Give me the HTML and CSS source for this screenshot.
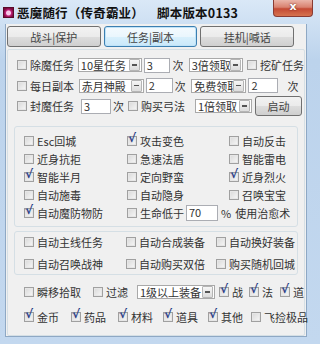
FILE: index.html
```html
<!DOCTYPE html>
<html lang="zh-CN">
<head>
  <meta charset="UTF-8">
  <title>恶魔随行</title>
  <link rel="stylesheet" href="styles.css">
</head>
<body>
  <div class="window">
    <div class="titlebar">
      <span class="app-icon"></span>
      <span class="title">恶魔随行（传奇霸业）</span>
      <span class="title version">脚本版本0133</span>
      <span class="close">x</span>
    </div>
    <div class="client">
      <div class="tabs">
        <button class="tab">战斗|保护</button>
        <button class="tab active">任务|副本</button>
        <button class="tab">挂机|喊话</button>
      </div>
      <div class="panel">
        <div class="tasks">
          <div class="row">
            <label class="chk w64"><span class="box"></span>除魔任务</label>
            <span class="select w65"><span class="val">10星任务</span><span class="arrow"></span></span>
            <span class="input w26">3</span>
            <span class="unit">次</span>
            <span class="select w55"><span class="val">3倍领取</span><span class="arrow"></span></span>
            <label class="chk ml4"><span class="box"></span>挖矿任务</label>
          </div>
          <div class="row">
            <label class="chk w64"><span class="box"></span>每日副本</label>
            <span class="select w65"><span class="val">赤月神殿</span><span class="arrow"></span></span>
            <span class="input w26">2</span>
            <span class="unit">次</span>
            <span class="select w55"><span class="val">免费领取</span><span class="arrow"></span></span>
            <span class="input w28 ml2">2</span>
            <span class="unit ml8">次</span>
          </div>
          <div class="row">
            <label class="chk w64"><span class="box"></span>封魔任务</label>
            <span class="input w28 ml0">3</span>
            <span class="unit u17">次</span>
            <label class="chk w67"><span class="box"></span>购买弓法</label>
            <span class="select w55"><span class="val">1倍领取</span><span class="arrow"></span></span>
            <button class="btn">启动</button>
          </div>
        </div>

        <div class="group skills">
          <label class="chk"><span class="box"></span>Esc回城</label>
          <label class="chk"><span class="box on"></span>攻击变色</label>
          <label class="chk"><span class="box"></span>自动反击</label>
          <label class="chk"><span class="box"></span>近身抗拒</label>
          <label class="chk"><span class="box"></span>急速法盾</label>
          <label class="chk"><span class="box"></span>智能雷电</label>
          <label class="chk"><span class="box on"></span>智能半月</label>
          <label class="chk"><span class="box"></span>定向野蛮</label>
          <label class="chk"><span class="box on"></span>近身烈火</label>
          <label class="chk"><span class="box"></span>自动施毒</label>
          <label class="chk"><span class="box"></span>自动隐身</label>
          <label class="chk"><span class="box"></span>召唤宝宝</label>
          <label class="chk"><span class="box on"></span>自动魔防物防</label>
          <div class="heal">
            <label class="chk"><span class="box"></span>生命低于</label>
            <span class="input w30">70</span>
            <span class="pct">%</span>
            <span>使用治愈术</span>
          </div>
        </div>

        <div class="group auto">
          <label class="chk"><span class="box"></span>自动主线任务</label>
          <label class="chk"><span class="box"></span>自动合成装备</label>
          <label class="chk"><span class="box"></span>自动换好装备</label>
          <label class="chk"><span class="box"></span>自动召唤战神</label>
          <label class="chk"><span class="box"></span>自动购买双倍</label>
          <label class="chk"><span class="box"></span>购买随机回城</label>
        </div>

        <div class="pickup">
          <div class="row">
            <label class="chk"><span class="box"></span>瞬移拾取</label>
            <label class="chk ml12"><span class="box"></span>过滤</label>
            <span class="select w81 ml9"><span class="val">1级以上装备</span><span class="arrow"></span></span>
            <label class="chk ml4"><span class="box on"></span>战</label>
            <label class="chk ml6"><span class="box on"></span>法</label>
            <label class="chk ml7"><span class="box on"></span>道</label>
          </div>
          <div class="row">
            <label class="chk"><span class="box on"></span>金币</label>
            <label class="chk ml12"><span class="box on"></span>药品</label>
            <label class="chk ml12"><span class="box on"></span>材料</label>
            <label class="chk ml10"><span class="box on"></span>道具</label>
            <label class="chk ml10"><span class="box on"></span>其他</label>
            <label class="chk ml8"><span class="box"></span>飞捡极品</label>
          </div>
        </div>
      </div>
    </div>
  </div>
</body>
</html>
```

FILE: styles.css
```css
body {
  margin: 0;
  font-family: "Noto Sans CJK SC", "Noto Sans", sans-serif;
  font-size: 11px;
  color: #333;
}
.window {
  width: 320px;
  height: 344px;
  background: linear-gradient(#dae8f7, #bcd3ec 60px, #c3d8ef);
  display: flex;
  flex-direction: column;
  overflow: hidden;
}
.titlebar {
  height: 24px;
  display: flex;
  align-items: center;
  padding-left: 3px;
  flex-shrink: 0;
}
.app-icon {
  width: 9px;
  height: 9px;
  background: radial-gradient(circle at 50% 55%, #f7c8e8 0 2px, #c0207a 3px, #7a0c3c 5px);
  border: 1px solid #5a0a2a;
  margin-right: 3px;
}
.title {
  font-weight: bold;
  font-size: 12.5px;
  color: #111;
  letter-spacing: 0.2px;
}
.version {
  margin-left: 13px;
}
.close {
  margin-left: auto;
  margin-right: 7px;
  align-self: flex-start;
  width: 38px;
  height: 16px;
  border: 1px solid #8a3b33;
  border-top: none;
  border-radius: 0 0 4px 4px;
  background: linear-gradient(#eab5a9, #d98270 45%, #c44a34 55%, #d6734f);
  color: #fff;
  font-family: "DejaVu Sans", sans-serif;
  font-weight: bold;
  font-size: 11px;
  line-height: 14px;
  text-align: center;
  text-shadow: 0 0 2px #5a1a12;
}
.client {
  flex: 1;
  margin: 0 13px 7px 5px;
  background: #f0f0f0;
  border: 1px solid #8ea8c4;
  border-top: none;
  display: flex;
  flex-direction: column;
  padding: 2px 0 0 1px;
}
.tabs {
  display: flex;
  gap: 3px;
  height: 21px;
  width: 287px;
}
.tab {
  flex: 1;
  font-family: inherit;
  font-size: 11px;
  color: #444;
  border: 1px solid #707070;
  border-radius: 3px;
  background: linear-gradient(#f2f2f2, #ebebeb 50%, #dddddd 51%, #cfcfcf);
  padding: 0;
}
.tab.active {
  border-color: #3c7fb1;
  background: linear-gradient(#f4fafe, #eaf6fd 50%, #d9f0fc 51%, #c9e8fa);
  box-shadow: inset 0 0 0 1px #bfe3f8;
}
.panel {
  flex: 1;
  margin-top: 2px;
  margin-right: 1px;
  border: 1px solid #d5dfe5;
  border-radius: 2px;
  display: flex;
  flex-direction: column;
}
.row {
  display: flex;
  align-items: center;
}
.tasks {
  padding: 8px 0 0 9px;
  display: flex;
  flex-direction: column;
  gap: 6.5px;
}
.tasks .row {
  height: 14px;
}
.chk {
  display: flex;
  align-items: center;
  white-space: nowrap;
}
.box {
  width: 8px;
  height: 8px;
  border: 1px solid #a0a0a0;
  background: linear-gradient(135deg, #d8d8d8, #f8f8f8);
  box-shadow: inset 0 0 0 1px #e6e6e6;
  margin-right: 3px;
  position: relative;
  flex-shrink: 0;
}
.box.on::after {
  content: "√";
  position: absolute;
  left: 0;
  top: -6px;
  font-family: "DejaVu Sans", sans-serif;
  font-size: 12px;
  font-weight: bold;
  color: #2c3f88;
}
.select {
  height: 12px;
  border: 1px solid #a9a9a9;
  background: #fff;
  display: flex;
  align-items: center;
  padding-left: 2px;
  overflow: hidden;
}
.select .val {
  flex: 1;
  overflow: hidden;
  white-space: nowrap;
}
.arrow {
  width: 9px;
  height: 10px;
  margin-right: 1px;
  border: 1px solid #b5b5b5;
  border-radius: 1px;
  background: linear-gradient(#f6f6f6, #dcdcdc);
  position: relative;
  flex-shrink: 0;
}
.arrow::after {
  content: "";
  position: absolute;
  left: 2px;
  top: 4px;
  width: 5px;
  height: 1.5px;
  background: #555;
}
.input {
  height: 13px;
  border: 1px solid #abadb3;
  background: #fff;
  margin-left: 2px;
  padding-left: 2px;
  line-height: 13px;
}
.unit {
  width: 17px;
  padding-left: 2px;
}
.u17 {
  width: 15px;
}
.w64 { width: 64px; }
.w65 { width: 63px; }
.w55 { width: 53px; }
.w67 { width: 67px; }
.w81 { width: 79px; }
.w26 { width: 24px; }
.w28 { width: 26px; }
.w30 { width: 28px; height: 14px; }
.ml0 { margin-left: 0; }
.ml2 { margin-left: 2px; }
.ml4 { margin-left: 4px; }
.ml6 { margin-left: 6px; }
.ml7 { margin-left: 7px; }
.ml8 { margin-left: 8px; }
.ml9 { margin-left: 9px; }
.ml10 { margin-left: 10px; }
.ml12 { margin-left: 12px; }
.btn {
  margin-left: 3px;
  width: 47px;
  height: 20px;
  font-family: inherit;
  font-size: 11px;
  color: #444;
  border: 1px solid #707070;
  border-radius: 3px;
  background: linear-gradient(#f2f2f2, #ebebeb 50%, #dddddd 51%, #cfcfcf);
  padding: 0;
}
.group {
  margin: 0 6px 0 6px;
  border: 1px solid #d5dfe5;
  border-radius: 3px;
  display: grid;
}
.skills {
  margin-top: 13px;
  grid-template-columns: 103px 102px 1fr;
  grid-auto-rows: 18px;
  align-items: center;
  padding: 5px 0 4px 9px;
}
.heal {
  grid-column: span 2;
  display: flex;
  align-items: center;
}
.pct {
  margin: 0 4px 0 3px;
}
.auto {
  margin-top: 4px;
  grid-template-columns: 102px 90px 1fr;
  grid-auto-rows: 20px;
  row-gap: 2px;
  align-items: center;
  padding: 0 0 0 9px;
}
.pickup {
  padding: 9.5px 0 0 16px;
  display: flex;
  flex-direction: column;
  gap: 10px;
}
.pickup .row {
  height: 15px;
}
```
